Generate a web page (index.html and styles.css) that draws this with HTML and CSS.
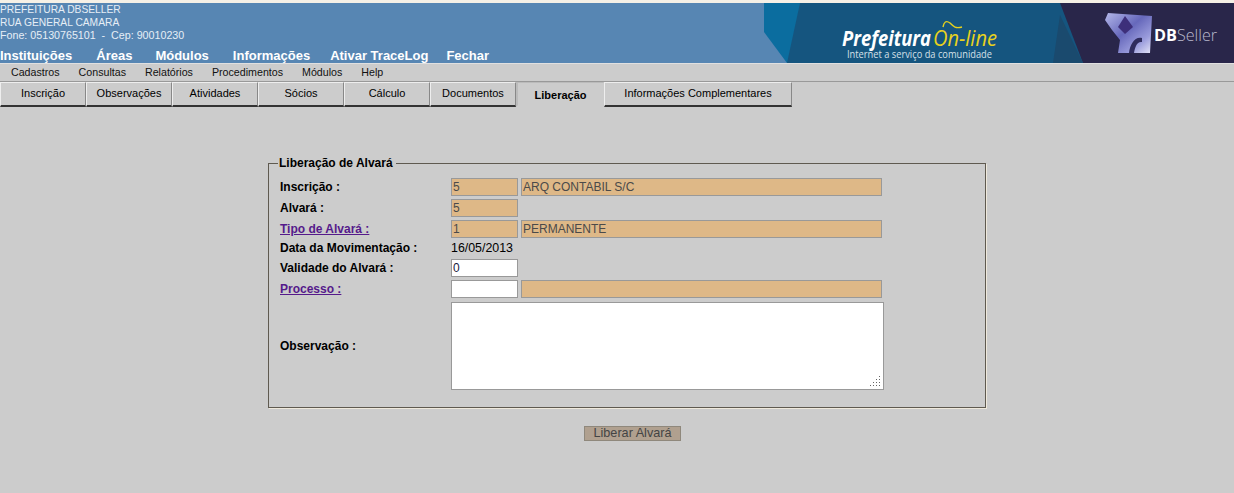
FILE: index.html
```html
<!DOCTYPE html>
<html lang="pt-BR">
<head>
    <meta charset="UTF-8">
    <title>Liberação de Alvará</title>
    <link rel="stylesheet" href="styles.css">
</head>
<body>
    <!-- Top banner -->
    <header class="topo">
        <div class="topo-esq">
            <div class="dados">
                <div>PREFEITURA DBSELLER</div>
                <div>RUA GENERAL CAMARA</div>
                <div class="dados-fone">Fone: 05130765101 &nbsp;-&nbsp; Cep: 90010230</div>
            </div>
            <nav class="nav-topo">
                <a class="nav1">Instituições</a>
                <a class="nav2">Áreas</a>
                <a class="nav3">Módulos</a>
                <a class="nav4">Informações</a>
                <a class="nav5">Ativar TraceLog</a>
                <a>Fechar</a>
            </nav>
        </div>
        <svg class="banner" width="470" height="60" viewBox="0 0 470 60">
            <defs>
                <linearGradient id="cubo" x1="0" y1="0" x2="1" y2="1">
                    <stop offset="0" stop-color="#b4b8ea"/>
                    <stop offset="0.45" stop-color="#6668bb"/>
                    <stop offset="0.75" stop-color="#9a9cdc"/>
                    <stop offset="1" stop-color="#e6e6f8"/>
                </linearGradient>
            </defs>
            <rect width="470" height="60" fill="#15557f"/>
            <polygon points="0,0 36,0 23,60 0,60" fill="#0b6d9f"/>
            <polygon points="0,29 23,60 0,60" fill="#5786b3"/>
            <polygon points="296,0 470,0 470,60 319,60" fill="#29264a"/>
            <polygon points="296,12 319,60 289,60" fill="#1a4a6e"/>
            <text x="78" y="43" class="logo-pref" textLength="89" lengthAdjust="spacingAndGlyphs">Prefeitura</text>
            <text x="169" y="43" class="logo-online" textLength="64" lengthAdjust="spacingAndGlyphs">On-line</text>
            <path d="M179 24 C180 19 182 17 186 20 C189 23 191 26 198 24" fill="none" stroke="#e8d21d" stroke-width="1.4"/>
            <text x="83" y="55" class="logo-sub" textLength="145" lengthAdjust="spacingAndGlyphs">Internet a serviço da comunidade</text>
            <polygon points="344,10 388,13 386,50 354,50 356,37 348,27 341,17" fill="url(#cubo)"/>
            <polygon points="361,13 369,24 361,31 354,24" fill="#3d2f7a"/>
            <path d="M365 50 C366 41 371 33 378 35 L378 39 C373 38 371 44 370 50 Z" fill="#2f2c5e"/>
            <text x="390" y="38" class="logo-db" textLength="23" lengthAdjust="spacingAndGlyphs">DB</text>
            <text x="413" y="38" class="logo-seller" textLength="40" lengthAdjust="spacingAndGlyphs">Seller</text>
        </svg>
    </header>

    <!-- Menu -->
    <nav class="menu">
        <a>Cadastros</a>
        <a>Consultas</a>
        <a>Relatórios</a>
        <a>Procedimentos</a>
        <a>Módulos</a>
        <a>Help</a>
    </nav>

    <!-- Tabs -->
    <div class="abas">
        <a class="aba">Inscrição</a>
        <a class="aba">Observações</a>
        <a class="aba">Atividades</a>
        <a class="aba">Sócios</a>
        <a class="aba">Cálculo</a>
        <a class="aba">Documentos</a>
        <a class="aba aba-ativa">Liberação</a>
        <a class="aba aba-larga">Informações Complementares</a>
    </div>

    <form class="form-alvara">
        <fieldset class="quadro">
            <legend>Liberação de Alvará</legend>

            <div class="linha">
                <label>Inscrição :</label>
                <input class="cod leitura" type="text" value="5">
                <input class="desc leitura" type="text" value="ARQ CONTABIL S/C">
            </div>
            <div class="linha">
                <label>Alvará :</label>
                <input class="cod leitura" type="text" value="5">
            </div>
            <div class="linha">
                <label><a href="#">Tipo de Alvará :</a></label>
                <input class="cod leitura" type="text" value="1">
                <input class="desc leitura" type="text" value="PERMANENTE">
            </div>
            <div class="linha linha-data">
                <label>Data da Movimentação :</label>
                <span class="data">16/05/2013</span>
            </div>
            <div class="linha">
                <label>Validade do Alvará :</label>
                <input class="cod" type="text" value="0">
            </div>
            <div class="linha">
                <label><a href="#">Processo :</a></label>
                <input class="cod" type="text">
                <input class="desc leitura" type="text">
            </div>
            <div class="linha linha-obs">
                <label>Observação :</label>
                <div class="obs-caixa">
                    <textarea class="obs"></textarea>
                    <!-- resize grip -->
                    <svg class="grip" width="11" height="11" viewBox="0 0 11 11">
                        <rect x="9" y="0" width="1" height="1"/>
                        <rect x="6" y="3" width="1" height="1"/>
                        <rect x="9" y="3" width="1" height="1"/>
                        <rect x="3" y="6" width="1" height="1"/>
                        <rect x="6" y="6" width="1" height="1"/>
                        <rect x="9" y="6" width="1" height="1"/>
                        <rect x="0" y="9" width="1" height="1"/>
                        <rect x="3" y="9" width="1" height="1"/>
                        <rect x="6" y="9" width="1" height="1"/>
                        <rect x="9" y="9" width="1" height="1"/>
                    </svg>
                </div>
            </div>
        </fieldset>

        <div class="acoes">
            <button class="btn-liberar" type="button" disabled>Liberar Alvará</button>
        </div>
    </form>
</body>
</html>
```

FILE: styles.css
```css
body {
    margin: 0;
    padding-top: 3px;
    height: 490px;
    overflow: hidden;
    background-color: #cccccc;
    background-image: linear-gradient(#f5f0e6 3px, #cccccc 3px);
    font-family: "Liberation Sans", Arial, sans-serif;
    font-size: 12px;
    color: #000;
}

.topo {
    display: flex;
    justify-content: space-between;
    height: 60px;
    background-color: #5786b3;
    color: #fff;
}

.dados {
    height: 44px;
    font-size: 10.25px;
    line-height: 13px;
    color: #e6eef6;
}

.dados-fone {
    font-size: 10.7px;
}

.nav-topo {
    display: flex;
    font-size: 13px;
    font-weight: bold;
    line-height: 18px;
}

.nav1 { margin-right: 24px; }
.nav2 { margin-right: 23px; }
.nav3 { margin-right: 24px; }
.nav4 { margin-right: 20px; }
.nav5 { margin-right: 18px; }

.banner {
    display: block;
}

.logo-pref {
    font-family: "Open Sans", sans-serif;
    font-size: 21px;
    font-weight: bold;
    font-style: italic;
    fill: #fff;
}

.logo-online {
    font-family: "Open Sans", sans-serif;
    font-size: 22px;
    font-style: italic;
    fill: #e8d21d;
}

.logo-sub {
    font-family: "Open Sans", sans-serif;
    font-size: 10px;
    fill: #d5e0e8;
}

.logo-db {
    font-family: "Open Sans", sans-serif;
    font-size: 16px;
    font-weight: bold;
    fill: #fff;
}

.logo-seller {
    font-family: "Open Sans", sans-serif;
    font-size: 16px;
    font-weight: 300;
    fill: #b9b9cd;
}

.menu {
    display: flex;
    gap: 19px;
    height: 17px;
    padding-left: 11px;
    border-top: 1px solid #e0e0e0;
    border-bottom: 1px solid #999;
    font-size: 10.67px;
    line-height: 16px;
    color: #111;
}

.abas {
    display: flex;
    height: 25px;
    font-size: 11px;
}

.aba {
    box-sizing: border-box;
    width: 86px;
    height: 25px;
    border-top: 1px solid #eee;
    border-left: 1px solid #eee;
    border-right: 1px solid #888;
    border-bottom: 2px solid #333;
    text-align: center;
    line-height: 20px;
}

.aba-ativa {
    width: 88px;
    border-color: #ccc;
    border-left: 2px solid #bbb;
    border-top: 1px solid #bbb;
    font-weight: bold;
    line-height: 24px;
}

.aba-larga {
    width: 188px;
}

.form-alvara {
    margin: 0;
    padding: 49px 0 0 268px;
}

.quadro {
    box-sizing: border-box;
    width: 718px;
    height: 252px;
    margin: 0;
    padding: 5px 10px 0 11px;
    border: 1px solid #5f5a50;
    box-shadow: 1px 1px 0 #efe9dc;
}

.quadro legend {
    padding: 0 3px 0 1px;
    margin-left: -2px;
    font-weight: bold;
    line-height: 15px;
}

.linha {
    display: flex;
    align-items: center;
    height: 21px;
}

.linha label {
    width: 171px;
    font-weight: bold;
}

.linha a {
    color: #551a8b;
}

.linha-data {
    height: 18px;
}

.linha-obs {
    height: 90px;
    margin-top: 2px;
}

.data {
    font-size: 12.4px;
}

input {
    box-sizing: border-box;
    height: 18px;
    margin: 0;
    padding: 0 1px;
    border: 1px solid #999;
    background-color: #fff;
    font-family: "Liberation Sans", Arial, sans-serif;
    font-size: 12px;
    color: #1a1a40;
}

.cod {
    width: 67px;
}

.desc {
    width: 361px;
    margin-left: 3px;
}

.leitura {
    background-color: #deb887;
    color: #4a4a4a;
}

.obs-caixa {
    position: relative;
    width: 433px;
    height: 88px;
}

.obs {
    display: block;
    box-sizing: border-box;
    width: 433px;
    height: 88px;
    margin: 0;
    border: 1px solid #999;
    background-color: #fff;
    resize: none;
}

.grip {
    position: absolute;
    right: 3px;
    bottom: 3px;
    fill: #666;
}

.acoes {
    display: flex;
    justify-content: center;
    width: 718px;
    padding-top: 18px;
}

.btn-liberar {
    box-sizing: border-box;
    width: 97px;
    height: 15px;
    margin-left: 11px;
    padding: 0;
    border: 1px solid #8f887c;
    background-color: #b0a08f;
    font-family: "Liberation Sans", Arial, sans-serif;
    font-size: 12.67px;
    line-height: 13px;
    color: #444;
}
```
